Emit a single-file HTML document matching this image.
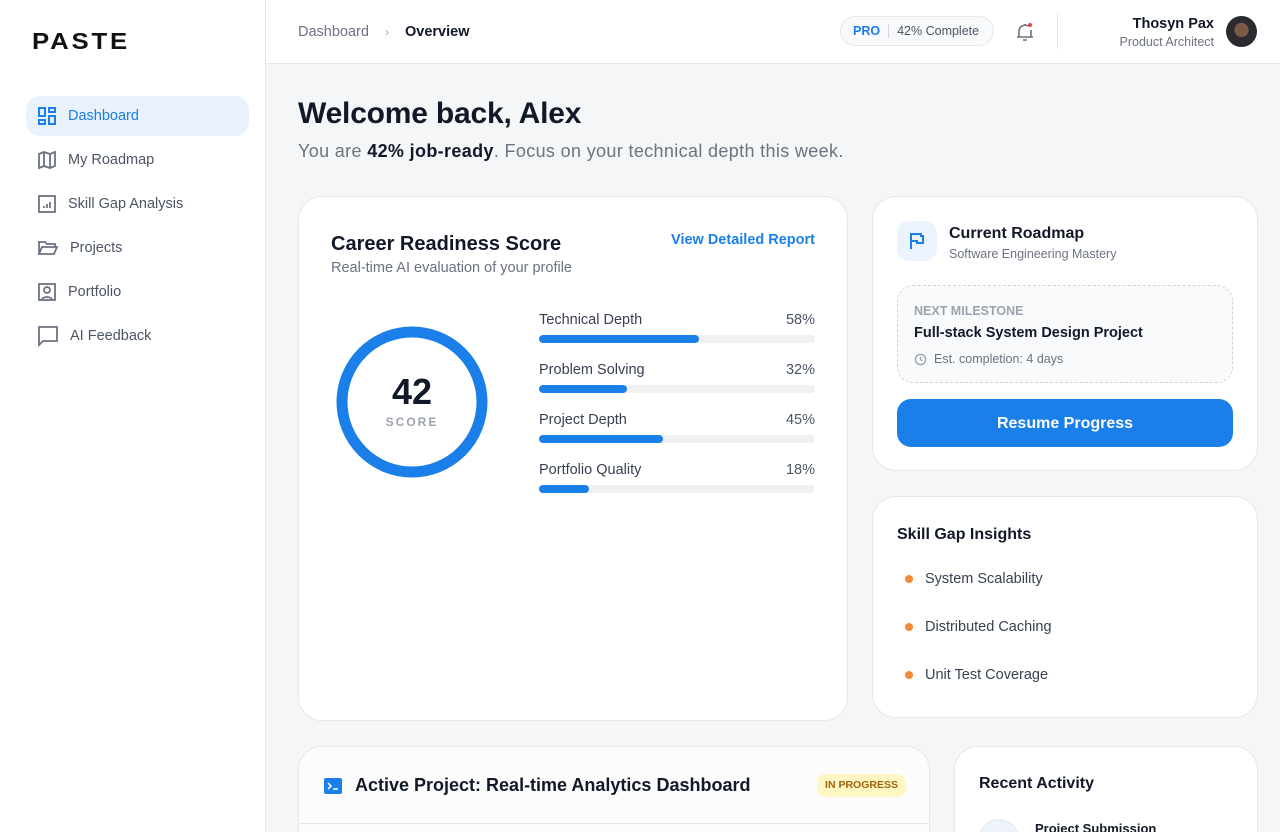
<!DOCTYPE html>
<html style="width:1280px;height:832px;overflow:hidden"><head><meta charset="utf-8"><style>
*{box-sizing:border-box;margin:0;padding:0}
body{width:1280px;height:832px;overflow:hidden;font-family:"Liberation Sans",sans-serif;background:#f5f6f8;position:relative;color:#111827}
.abs{position:absolute}
.side{left:0;top:0;width:266px;height:832px;background:#fff;border-right:1px solid #e5e7eb}
.logo{left:32px;top:28px;font-size:23px;font-weight:700;letter-spacing:2.5px;color:#111;font-family:"Liberation Sans",sans-serif;transform:scaleX(1.12);transform-origin:left}
.nav{left:26px;width:223px;height:40px;border-radius:14px;display:flex;align-items:center;padding-left:11px;font-size:14.5px;color:#4b5563}
.nav svg{margin-right:11px}
.nav.on{background:#e8f1fc;color:#1a7fe8}
.hdr{left:266px;top:0;width:1014px;height:64px;background:#fff;border-bottom:1px solid #e5e7eb}
.card{background:#fff;border:1px solid #e5e7eb;border-radius:24px}
.bar{position:absolute;left:0;width:276px;height:8px;background:#f0f1f3;border-radius:4px}
.bar i{display:block;height:8px;background:#1a7fe8;border-radius:4px}
.lbl{position:absolute;left:0;width:276px;font-size:14.5px;color:#374151;display:flex;justify-content:space-between}
.lbl span:last-child{color:#4b5563}
.dot{position:absolute;left:32px;width:8px;height:8px;border-radius:50%;background:#f28c38}
.ins{position:absolute;left:52px;font-size:14.5px;color:#374151}
</style></head><body>
<div class="abs side">
<div class="abs logo">PASTE</div>
<div class="abs nav on" style="top:96px"><svg width="20" height="20" viewBox="0 0 20 20" fill="none" stroke="#1a7fe8" stroke-width="2"><rect x="2" y="2" width="6" height="8"/><rect x="12" y="2" width="6" height="4"/><rect x="2" y="14" width="6" height="4"/><rect x="12" y="10" width="6" height="8"/></svg>Dashboard</div>
<div class="abs nav" style="top:140px"><svg width="20" height="20" viewBox="0 0 20 20" fill="none" stroke="#6b7280" stroke-width="1.8"><path d="M2 4l5-2 6 2 5-2v14l-5 2-6-2-5 2z M7 2v14 M13 4v14"/></svg>My Roadmap</div>
<div class="abs nav" style="top:184px"><svg width="20" height="20" viewBox="0 0 20 20" fill="none" stroke="#6b7280" stroke-width="1.8"><rect x="2" y="2" width="16" height="16"/><path d="M7 14v-2 M10 14v-4 M13 14v-6"/></svg>Skill Gap Analysis</div>
<div class="abs nav" style="top:228px"><svg width="22" height="20" viewBox="0 0 22 20" fill="none" stroke="#6b7280" stroke-width="1.8"><path d="M2 16V4h6l2 2h8v3 M2 16l3-7h15l-3 7z"/></svg>Projects</div>
<div class="abs nav" style="top:272px"><svg width="20" height="20" viewBox="0 0 20 20" fill="none" stroke="#6b7280" stroke-width="1.8"><rect x="2" y="2" width="16" height="16"/><circle cx="10" cy="8" r="3"/><path d="M5 18c0-4 10-4 10 0"/></svg>Portfolio</div>
<div class="abs nav" style="top:316px"><svg width="22" height="22" viewBox="0 0 22 22" fill="none" stroke="#6b7280" stroke-width="1.8"><path d="M2 2h18v14H6l-4 4z"/></svg>AI Feedback</div>
</div>
<div class="abs hdr">
<div class="abs" style="left:32px;top:24px;font-size:14.5px;color:#6b7280">Dashboard <span style="margin:0 12px;color:#9ca3af;font-size:12px">›</span> <span style="color:#111827;font-weight:600">Overview</span></div>
<div class="abs" style="left:574px;top:16px;width:154px;height:30px;border:1px solid #e5e7eb;border-radius:15px;background:#f8f9fb;font-size:12.5px;display:flex;align-items:center;padding-left:12px"><b style="color:#1a7fe8">PRO</b><span style="width:1px;height:14px;background:#d1d5db;margin:0 8px"></span><span style="color:#4b5563">42% Complete</span></div>
<svg class="abs" style="left:748px;top:21px" width="22" height="22" viewBox="0 0 22 22" fill="none" stroke="#6b7280" stroke-width="1.6"><path d="M5 16V10a6 6 0 0 1 9-5 M17 9v7 M3 16h16 M9 19h4 M11 3v1"/><circle cx="16" cy="4" r="2" fill="#ef4444" stroke="none"/></svg>
<div class="abs" style="left:791px;top:13px;width:1px;height:36px;background:#e5e7eb"></div>
<div class="abs" style="right:66px;top:16px;text-align:right"><div style="font-size:14.5px;font-weight:700">Thosyn Pax</div><div style="font-size:12.5px;color:#6b7280;margin-top:3px">Product Architect</div></div>
<div class="abs" style="left:960px;top:16px;width:31px;height:31px;border-radius:50%;background:radial-gradient(circle at 50% 45%,#7a5a44 0 30%,#2a2a30 32% 100%)"></div>
</div>
<div class="abs" style="left:298px;top:97px;font-size:30px;font-weight:700;letter-spacing:-0.2px">Welcome back, Alex</div>
<div class="abs" style="left:298px;top:141px;font-size:18px;color:#6b7280;letter-spacing:0.35px">You are <b style="color:#111827">42% job-ready</b>. Focus on your technical depth this week.</div>

<div class="abs card" style="left:298px;top:196px;width:550px;height:525px">
<div class="abs" style="left:32px;top:36px;font-size:20px;font-weight:700">Career Readiness Score</div>
<div class="abs" style="left:32px;top:63px;font-size:14.5px;color:#6b7280">Real-time AI evaluation of your profile</div>
<div class="abs" style="right:32px;top:35px;font-size:14.5px;font-weight:700;color:#1a7fe8">View Detailed Report</div>
<svg class="abs" style="left:37px;top:129px" width="152" height="152"><circle cx="76" cy="76" r="70" fill="none" stroke="#1a7fe8" stroke-width="11"/></svg>
<div class="abs" style="left:37px;top:174px;width:152px;text-align:center;font-size:36px;font-weight:700">42</div>
<div class="abs" style="left:37px;top:218px;width:152px;text-align:center;font-size:12px;letter-spacing:2px;color:#9ca3af;font-weight:700">SCORE</div>
<div class="abs" style="left:240px;top:115px">
<div class="lbl" style="top:0"><span>Technical Depth</span><span>58%</span></div><div class="bar" style="top:23px"><i style="width:160px"></i></div>
<div class="lbl" style="top:50px"><span>Problem Solving</span><span>32%</span></div><div class="bar" style="top:73px"><i style="width:88px"></i></div>
<div class="lbl" style="top:100px"><span>Project Depth</span><span>45%</span></div><div class="bar" style="top:123px"><i style="width:124px"></i></div>
<div class="lbl" style="top:150px"><span>Portfolio Quality</span><span>18%</span></div><div class="bar" style="top:173px"><i style="width:50px"></i></div>
</div>
</div>

<div class="abs card" style="left:872px;top:196px;width:386px;height:275px">
<div class="abs" style="left:24px;top:24px;width:40px;height:40px;border-radius:12px;background:#eaf3fe"><svg style="margin:11px" width="18" height="18" viewBox="0 0 18 18" fill="none" stroke="#1a7fe8" stroke-width="2"><path d="M3 17V2h10v2h2v7H9V9H3"/></svg></div>
<div class="abs" style="left:76px;top:28px;font-size:16px;font-weight:700">Current Roadmap</div>
<div class="abs" style="left:76px;top:50px;font-size:12.5px;color:#6b7280">Software Engineering Mastery</div>
<div class="abs" style="left:24px;top:88px;width:336px;height:98px;border:1px dashed #d1d5db;border-radius:16px;background:#f9fafb">
<div class="abs" style="left:16px;top:18px;font-size:12.5px;font-weight:700;color:#9ca3af">NEXT MILESTONE</div>
<div class="abs" style="left:16px;top:39px;font-size:14.5px;font-weight:700">Full-stack System Design Project</div>
<div class="abs" style="left:16px;top:66px;font-size:12.5px;color:#6b7280;display:flex;align-items:center"><svg width="13" height="13" viewBox="0 0 14 14" fill="none" stroke="#9ca3af" stroke-width="1.4" style="margin-right:7px"><circle cx="7" cy="7" r="5.5"/><path d="M7 4v3l2 1.5"/></svg>Est. completion: 4 days</div>
</div>
<div class="abs" style="left:24px;top:202px;width:336px;height:48px;border-radius:14px;background:#1a7fe8;color:#fff;font-size:16px;font-weight:700;text-align:center;line-height:50px">Resume Progress</div>
</div>

<div class="abs card" style="left:872px;top:496px;width:386px;height:222px">
<div class="abs" style="left:24px;top:29px;font-size:16px;font-weight:700">Skill Gap Insights</div>
<div class="dot" style="top:78px"></div><div class="ins" style="top:74px">System Scalability</div>
<div class="dot" style="top:126px"></div><div class="ins" style="top:122px">Distributed Caching</div>
<div class="dot" style="top:174px"></div><div class="ins" style="top:170px">Unit Test Coverage</div>
</div>

<div class="abs card" style="left:298px;top:746px;width:632px;height:120px;background:#fcfcfd">
<svg class="abs" style="left:24px;top:30px" width="20" height="18" viewBox="0 0 20 18"><rect x="1" y="1" width="18" height="16" rx="2" fill="#1a7fe8"/><path d="M5 6l3 3-3 3 M10 12h5" stroke="#fff" stroke-width="1.5" fill="none"/></svg>
<div class="abs" style="left:56px;top:28px;font-size:18px;font-weight:700">Active Project: Real-time Analytics Dashboard</div>
<div class="abs" style="left:518px;top:27px;width:89px;height:23px;border-radius:8px;background:#fef6c3;color:#a1620b;font-size:10.5px;font-weight:700;text-align:center;line-height:23px">IN PROGRESS</div>
<div class="abs" style="left:0;top:76px;width:630px;height:1px;background:#e5e7eb"></div>
</div>

<div class="abs card" style="left:954px;top:746px;width:304px;height:120px">
<div class="abs" style="left:24px;top:28px;font-size:16px;font-weight:700">Recent Activity</div>
<div class="abs" style="left:24px;top:72px;width:40px;height:40px;border-radius:50%;background:#eef2fb;border:1px solid #e5e7eb"></div>
<div class="abs" style="left:80px;top:74px;font-size:13px;font-weight:700">Project Submission</div>
</div>
</body></html>
